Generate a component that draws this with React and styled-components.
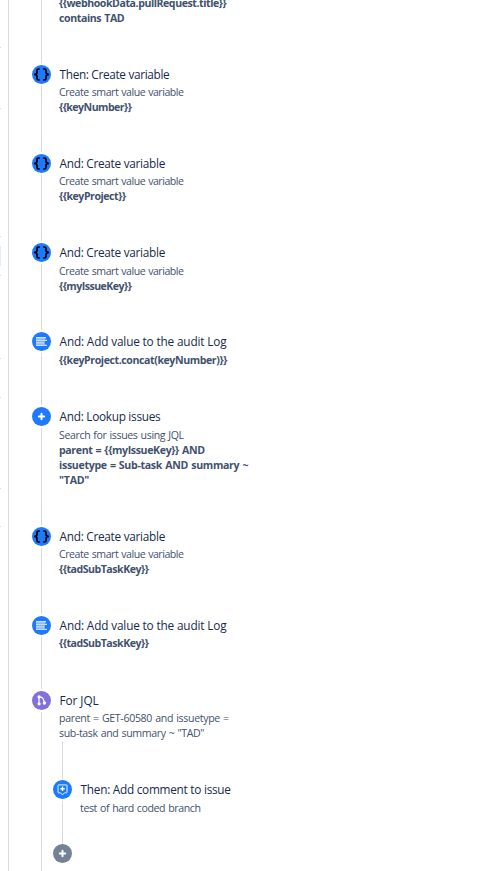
import React from "react";
import styled, { createGlobalStyle, css } from "styled-components";

const GlobalStyle = createGlobalStyle`
  * { box-sizing: border-box; }
  body { margin: 0; background: #fff; font-family: "Open Sans", "Noto Sans", sans-serif; }
`;

const Page = styled.main`
  display: flex;
  width: 488px;
  height: 871px;
  overflow: hidden;
  background: #fff;
`;

const SideEdge = styled.aside`
  display: flex;
  flex-direction: column;
  width: 9px;
  flex: none;
  border-right: 1px solid #d9dbe0;
`;

const Divider = styled.span`
  width: 1px;
  height: 1px;
  flex: none;
  margin-top: ${(p) => p.$gap}px;
  background: #d9dbe0;
`;

const ActiveItem = styled.span`
  width: 1px;
  height: 20px;
  flex: none;
  margin-top: 9px;
  background: #deebff;
`;

const Chain = styled.section`
  display: flex;
  flex-direction: column;
  padding-left: 23px;
`;

const StepRow = styled.article`
  display: flex;
  height: ${(p) => p.$height}px;
  flex: none;
`;

const Rail = styled.div`
  display: flex;
  flex-direction: column;
  align-items: center;
  width: 19px;
  flex: none;
`;

const Line = styled.span`
  width: 1px;
  flex: 1;
  margin: ${(p) => p.$top ?? 2}px 0 ${(p) => p.$bottom ?? 2}px;
  background: #d9dbe0;
`;

const Badge = styled.span`
  display: flex;
  width: 19px;
  height: 19px;
  flex: none;
  border-radius: 50%;
  background: ${(p) => p.$color};

  svg { display: block; width: 19px; height: 19px; }
`;

const Content = styled.div`
  display: flex;
  flex-direction: column;
  padding-left: 8px;
  white-space: nowrap;
`;

const Title = styled.h2`
  margin: 0 0 0 0.6px;
  font-size: 11.8px;
  font-weight: 400;
  line-height: 19px;
  letter-spacing: ${(p) => p.$track - 0.09}px;
  color: #172b4d;
`;

const Details = styled.div`
  display: flex;
  flex-direction: column;
  margin-top: ${(p) => p.$gap}px;
`;

const Text = styled.span`
  font-size: 10.6px;
  line-height: 15px;
  letter-spacing: ${(p) => p.$track - 0.09}px;
  word-spacing: 0.7px;
  color: #42526e;
  ${(p) => p.$strong && css`
    font-weight: 700;
    letter-spacing: ${p.$track - 0.23}px;
  `}
`;

const Intro = styled(Details)`
  height: 65px;
  margin-top: -4px;
`;

const BranchBody = styled.div`
  display: flex;
  flex-direction: column;
`;

const Branch = styled.div`
  display: flex;
  flex-direction: column;
  padding-left: 2px;
`;

const BranchLead = styled(Rail)`
  height: 39px;
`;

const BLUE = "#1d7afc";

const icons = {
  variable: (
    <svg viewBox="0 0 19 19" fill="none" stroke="#000" strokeWidth="1.7">
      <path d="M7.8 4H6.6Q5 4 5 5.6V7.6Q5 9.5 2 9.5Q5 9.5 5 11.4V13.4Q5 15 6.6 15H7.8M11.2 4H12.4Q14 4 14 5.6V7.6Q14 9.5 17 9.5Q14 9.5 14 11.4V13.4Q14 15 12.4 15H11.2" />
    </svg>
  ),
  log: (
    <svg viewBox="0 0 19 19">
      <path d="M4 5h9v9H4z" fill="#79afff" />
      <path d="M4 5h10v1.4H4zM4 7.8h11v1.3H4zM4 10.3h8v1.3H4zM4 12.7h11v1.3H4z" fill="#c9deff" />
    </svg>
  ),
  plus: (
    <svg viewBox="0 0 19 19" fill="none" stroke="#fff" strokeWidth="2" strokeLinecap="round">
      <path d="M9.5 6.8v5.4M6.8 9.5h5.4" />
    </svg>
  ),
  branch: (
    <svg viewBox="0 0 19 19" fill="none" stroke="#fff" strokeWidth="1.2">
      <path d="M7 6v7M7.2 6.2H9Q11.8 6.8 12.2 12" />
      <g fill="#fff" stroke="none">
        <circle cx="7.1" cy="5.9" r="1.6" />
        <circle cx="7.1" cy="12.8" r="1.6" />
        <circle cx="12.4" cy="12" r="1.7" />
      </g>
    </svg>
  ),
  comment: (
    <svg viewBox="0 0 19 19" fill="none" stroke="#e6f0ff" strokeWidth="1">
      <path d="M5.5 4.9h8q.5 0 .5.5v6.9q0 .5-.5.5h-2L9.5 14.9l-2-2.1h-2q-.5 0-.5-.5V5.4q0-.5.5-.5z" />
      <path d="M9.5 6.6v4.4M7.3 8.8h4.4" stroke="#fff" strokeWidth="1.4" />
    </svg>
  ),
};

const createVariable = { text: "Create smart value variable", track: -0.38 };

const steps = [
  { icon: "variable", title: "Then: Create variable", track: -0.24, height: 89, gap: 1,
    lines: [createVariable, { text: "{{keyNumber}}", track: -0.3, strong: true }] },
  { icon: "variable", title: "And: Create variable", track: -0.19, height: 89, gap: 1,
    lines: [createVariable, { text: "{{keyProject}}", track: -0.23, strong: true }] },
  { icon: "variable", title: "And: Create variable", track: -0.19, height: 89, gap: 2,
    lines: [createVariable, { text: "{{myIssueKey}}", track: -0.29, strong: true }] },
  { icon: "log", title: "And: Add value to the audit Log", track: -0.07, height: 75, gap: 2,
    lines: [{ text: "{{keyProject.concat(keyNumber)}}", track: -0.19, strong: true }] },
  { icon: "plus", title: "And: Lookup issues", track: -0.19, height: 120, gap: 2,
    lines: [
      { text: "Search for issues using JQL", track: -0.29 },
      { text: "parent = {{myIssueKey}} AND", track: -0.14, strong: true },
      { text: "issuetype = Sub-task AND summary ~", track: -0.08, strong: true },
      { text: '"TAD"', track: 0, strong: true },
    ] },
  { icon: "variable", title: "And: Create variable", track: -0.19, height: 89, gap: 1,
    lines: [createVariable, { text: "{{tadSubTaskKey}}", track: -0.25, strong: true }] },
  { icon: "log", title: "And: Add value to the audit Log", track: -0.07, height: 75, gap: 1,
    lines: [{ text: "{{tadSubTaskKey}}", track: -0.25, strong: true }] },
];

const branchLines = [
  { text: "parent = GET-60580 and issuetype =", track: -0.24 },
  { text: 'sub-task and summary ~ "TAD"', track: -0.29 },
];

function Lines({ lines, gap }) {
  return (
    <Details $gap={gap}>
      {lines.map((l) => (
        <Text key={l.text} $track={l.track} $strong={l.strong}>{l.text}</Text>
      ))}
    </Details>
  );
}

function Step({ step }) {
  return (
    <StepRow $height={step.height}>
      <Rail>
        <Badge $color={BLUE}>{icons[step.icon]}</Badge>
        <Line />
      </Rail>
      <Content>
        <Title $track={step.track}>{step.title}</Title>
        <Lines lines={step.lines} gap={step.gap} />
      </Content>
    </StepRow>
  );
}

const dividerGaps = [47, 60, 127];
const lowerDividerGaps = [9, 82, 38, 90, 37];

export default function App() {
  return (
    <>
      <GlobalStyle />
      <Page>
        <SideEdge>
          {dividerGaps.map((g) => <Divider key={g} $gap={g} />)}
          <ActiveItem />
          {lowerDividerGaps.map((g) => <Divider key={g} $gap={g} />)}
        </SideEdge>
        <Chain>
          <StepRow $height={65}>
            <Rail><Line $top={0} /></Rail>
            <Content>
              <Intro>
                <Text $strong $track={-0.21}>{"{{webhookData.pullRequest.title}}"}</Text>
                <Text $strong $track={-0.18}>contains TAD</Text>
              </Intro>
            </Content>
          </StepRow>
          {steps.map((s, i) => <Step key={i} step={s} />)}
          <StepRow $height={180}>
            <Rail>
              <Badge $color="#8270db">{icons.branch}</Badge>
              <Line $bottom={0} />
            </Rail>
            <BranchBody>
              <Content>
                <Title $track={0}>For JQL</Title>
                <Lines lines={branchLines} gap={1} />
              </Content>
              <Branch>
                <BranchLead><Line $top={0} $bottom={1} /></BranchLead>
                <StepRow $height={64}>
                  <Rail>
                    <Badge $color={BLUE}>{icons.comment}</Badge>
                    <Line $bottom={0} />
                  </Rail>
                  <Content>
                    <Title $track={-0.17}>Then: Add comment to issue</Title>
                    <Lines lines={[{ text: "test of hard coded branch", track: -0.31 }]} gap={2} />
                  </Content>
                </StepRow>
                <Badge $color="#758195">{icons.plus}</Badge>
              </Branch>
            </BranchBody>
          </StepRow>
        </Chain>
      </Page>
    </>
  );
}
